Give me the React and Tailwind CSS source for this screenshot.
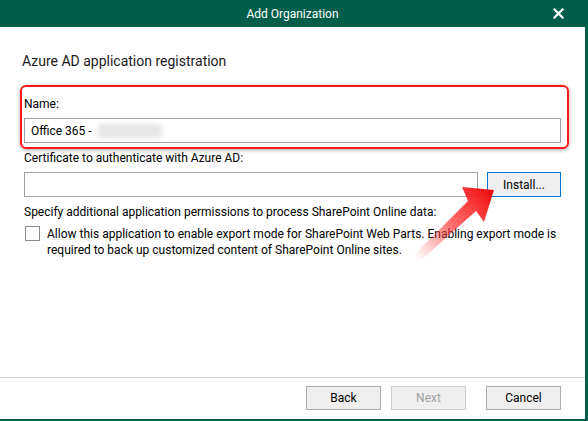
import React from "react";

function Btn({ children, className = "", disabled }) {
  return (
    <button
      className={`h-[24px] w-[75px] border text-[12px] ${
        disabled ? "border-[#cccccc] text-[#a0a0a0] bg-[#efefef]" : "border-[#adadad] text-black bg-[#efefef]"
      } ${className}`}
    >
      {children}
    </button>
  );
}

export default function App() {
  return (
    <div
      className="relative w-[588px] h-[421px] bg-white overflow-hidden"
      style={{ fontFamily: 'Roboto, "Noto Sans", sans-serif' }}
    >
      <div className="flex flex-col h-full border-r-[3px] border-b-[2px] border-[#005e4b]">
        {/* Title bar */}
        <div className="relative h-[27px] bg-[#005e4b] flex items-center justify-center shrink-0">
          <span className="text-white text-[12px]">Add Organization</span>
          <svg className="absolute right-[21px] top-[8px]" width="11" height="11" viewBox="0 0 11 11">
            <path d="M1.5 1.5 L9.5 9.5 M9.5 1.5 L1.5 9.5" stroke="white" strokeWidth="2.2" strokeLinecap="square" />
          </svg>
        </div>

        {/* Content */}
        <div className="flex-1 flex flex-col pl-[24px] pr-[24px]">
          <div className="mt-[24px] -ml-[2px] text-[14px] text-[#1a1a1a] leading-[20px]">
            Azure AD application registration
          </div>

          <div className="relative mt-[16px] flex flex-col">
            <div className="text-[12px] leading-[16px] mt-[9px] text-black">Name:</div>
            <div className="mt-[6px] h-[25px] border border-[#a0a0a0] flex items-center pl-[6px] text-[12px] text-black">
              Office 365 -
              <span className="ml-[6px] inline-block h-[14px] w-[64px] rounded-[3px] bg-[#e6e6e6] blur-[2px]"></span>
            </div>
            <div className="absolute -left-[4px] -right-[8px] -top-[2px] -bottom-[6px] border-[2px] border-[#ff1a1a] rounded-[6px] shadow-[0_1px_4px_rgba(0,0,0,0.35)]"></div>
          </div>

          <div className="mt-[7px] text-[12px] leading-[16px] text-black">
            Certificate to authenticate with Azure AD:
          </div>
          <div className="mt-[6px] flex gap-[9px]">
            <div className="h-[25px] flex-1 border border-[#a0a0a0]"></div>
            <button className="h-[25px] w-[74px] border border-[#0078d7] bg-[#efefef] text-[12px] text-black">
              Install...
            </button>
          </div>

          <div className="mt-[7px] text-[12px] leading-[16px] text-black">
            Specify additional application permissions to process SharePoint Online data:
          </div>
          <div className="mt-[6px] flex gap-[7px]">
            <div className="ml-[1px] w-[15px] h-[15px] border border-[#8a8a8a] bg-white shrink-0"></div>
            <div className="text-[12px] leading-[16px] text-black">
              Allow this application to enable export mode for SharePoint Web Parts. Enabling export mode is required to back up customized content of SharePoint Online sites.
            </div>
          </div>
        </div>

        {/* Footer */}
        <div className="h-[42px] border-t border-[#d6d6d6] flex items-start justify-end pt-[8px] pr-[24px] shrink-0">
          <Btn>Back</Btn>
          <Btn className="ml-[10px]" disabled>Next</Btn>
          <Btn className="ml-[20px]">Cancel</Btn>
        </div>
      </div>

      {/* Red arrow overlay */}
      <svg className="absolute left-[405px] top-[170px] pointer-events-none" width="100" height="100" viewBox="0 0 100 100">
        <defs>
          <linearGradient id="ag" x1="10" y1="90" x2="85" y2="22" gradientUnits="userSpaceOnUse">
            <stop offset="0" stopColor="#ff6060" stopOpacity="0" />
            <stop offset="0.5" stopColor="#ff3030" stopOpacity="0.7" />
            <stop offset="1" stopColor="#f01010" />
          </linearGradient>
        </defs>
        <path d="M8 86 L63 31 L57 17 L89 20 L79 52 L71 41 L14 92 Z" fill="url(#ag)" />
      </svg>
    </div>
  );
}
